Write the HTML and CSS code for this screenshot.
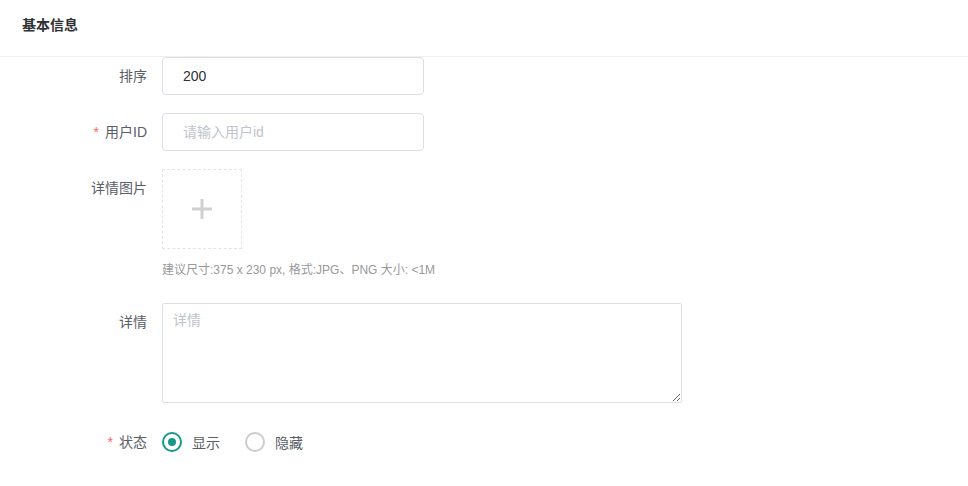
FILE: index.html
```html
<!DOCTYPE html>
<html lang="zh-CN">
<head>
    <meta charset="UTF-8">
    <title>基本信息</title>
    <link rel="stylesheet" href="styles.css">
</head>
<body>
<div class="card-header">基本信息</div>
<form class="info-form">
    <div class="form-row">
        <label class="form-label" for="sort">排序</label>
        <div class="form-field">
            <input class="text-input" id="sort" type="text" value="200">
        </div>
    </div>
    <div class="form-row">
        <label class="form-label required" for="userId">用户ID</label>
        <div class="form-field">
            <input class="text-input" id="userId" type="text" placeholder="请输入用户id">
        </div>
    </div>
    <div class="form-row">
        <label class="form-label">详情图片</label>
        <div class="form-field">
            <div class="upload-box">
                <svg width="20" height="20" viewBox="0 0 20 20">
                    <rect x="8.5" y="0" width="3" height="20" fill="#d0d0d0"/>
                    <rect x="0" y="8.5" width="20" height="3" fill="#d0d0d0"/>
                </svg>
            </div>
            <div class="upload-tip">建议尺寸:375 x 230 px, 格式:JPG、PNG 大小: &lt;1M</div>
        </div>
    </div>
    <div class="form-row row-detail">
        <label class="form-label" for="detail">详情</label>
        <div class="form-field">
            <textarea class="text-area" id="detail" placeholder="详情"></textarea>
        </div>
    </div>
    <div class="form-row row-status">
        <label class="form-label required">状态</label>
        <div class="form-field radios">
            <label class="radio checked"><span class="radio-dot"></span>显示</label>
            <label class="radio"><span class="radio-dot"></span>隐藏</label>
        </div>
    </div>
</form>
</body>
</html>
```

FILE: styles.css
```css
body {
    margin: 0;
    background-color: #fff;
    font-family: "Liberation Sans", "Noto Sans CJK SC", sans-serif;
    font-size: 14px;
    color: #5a5e66;
}

.card-header {
    height: 57px;
    box-sizing: border-box;
    padding: 15px 22px 0;
    line-height: 20px;
    font-size: 14px;
    font-weight: bold;
    color: #303133;
    border-bottom: 1px solid #eeeeee;
}

.form-row {
    display: flex;
    margin-bottom: 18px;
}

.form-label {
    width: 162px;
    padding-right: 15px;
    box-sizing: border-box;
    text-align: right;
    line-height: 38px;
    color: #5a5e66;
}

.form-label.required::before {
    content: "*";
    color: #f56c6c;
    margin-right: 6px;
}

.form-field {
    flex: 0 0 auto;
}

.text-input {
    width: 262px;
    height: 38px;
    box-sizing: border-box;
    padding: 0 20px;
    border: 1px solid #dcdfe6;
    border-radius: 4px;
    font-family: inherit;
    font-size: 14px;
    color: #303133;
    outline: none;
}

.text-input::placeholder,
.text-area::placeholder {
    color: #c0c4cc;
}

.upload-box {
    width: 80px;
    height: 80px;
    box-sizing: border-box;
    border: 1px dashed #e4e4e4;
    display: flex;
    align-items: center;
    justify-content: center;
}

.upload-tip {
    margin-top: 12px;
    line-height: 18px;
    font-size: 12px;
    color: #999;
}

.row-detail {
    margin-top: 24px;
}

.text-area {
    display: block;
    width: 520px;
    height: 100px;
    box-sizing: border-box;
    padding: 6px 10px;
    border: 1px solid #dcdfe6;
    border-radius: 2px;
    font-family: inherit;
    font-size: 14px;
    line-height: 20px;
    color: #303133;
    outline: none;
}

.row-status {
    margin-top: 20px;
}

.radios {
    display: flex;
    align-items: center;
    gap: 25px;
    height: 38px;
}

.radio {
    display: flex;
    align-items: center;
    gap: 10px;
    color: #5a5e66;
}

.radio-dot {
    width: 20px;
    height: 20px;
    box-sizing: border-box;
    border: 2px solid #cccccc;
    border-radius: 50%;
    display: flex;
    align-items: center;
    justify-content: center;
}

.radio.checked .radio-dot {
    border-color: #17998a;
}

.radio.checked .radio-dot::after {
    content: "";
    width: 8px;
    height: 8px;
    border-radius: 50%;
    background-color: #17998a;
}
```
